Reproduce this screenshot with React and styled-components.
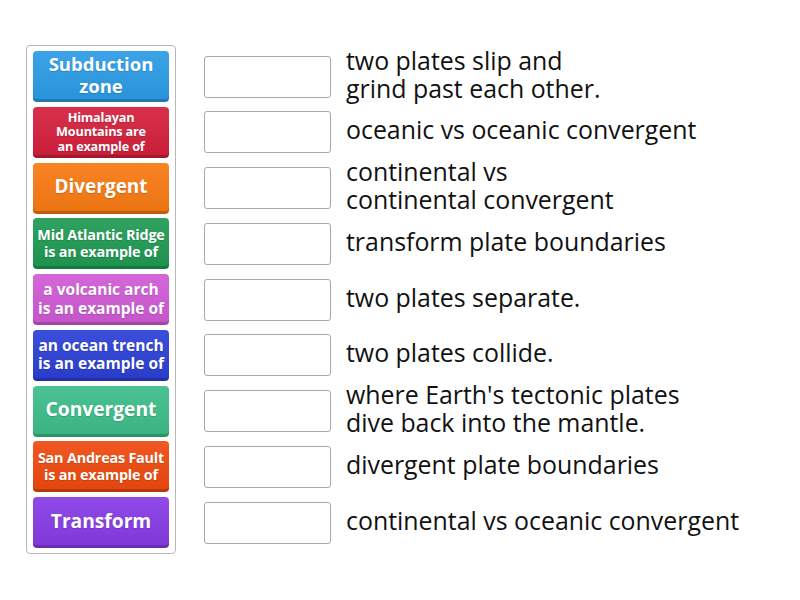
import React from 'react';
import styled, { createGlobalStyle } from 'styled-components';

const Global = createGlobalStyle`
  body {
    margin: 0;
    background: #fff;
    font-family: "Open Sans", "Noto Sans", sans-serif;
  }
`;

const Page = styled.div`
  display: flex;
  align-items: flex-start;
  gap: 28px;
  padding: 45px 0 0 26px;
  width: 800px;
  height: 600px;
  box-sizing: border-box;
`;

const Panel = styled.div`
  width: 150px;
  box-sizing: border-box;
  border: 1px solid #b8b8b8;
  border-radius: 4px;
  padding: 5px 6px;
  display: flex;
  flex-direction: column;
  gap: 4.75px;
`;

const Tile = styled.div`
  height: 51px;
  border-radius: 4px;
  background: ${p => p.$bg};
  background-image: linear-gradient(rgba(255,255,255,0.08), rgba(0,0,0,0.06));
  box-shadow: inset 0 -3px 0 rgba(0, 0, 0, 0.18);
  color: #fff;
  font-weight: 700;
  font-size: ${p => p.$size}px;
  line-height: ${p => p.$lh}px;
  display: flex;
  align-items: center;
  justify-content: center;
  text-align: center;
  padding-bottom: ${p => (p.$size > 17 ? 4 : 2)}px;
  box-sizing: border-box;
  text-shadow: 0 1px 1px rgba(0, 0, 0, 0.15);
  white-space: pre-line;
  letter-spacing: ${p => (p.$size < 15 ? '-0.2px' : '0')};
`;

const Rows = styled.div`
  padding-top: 6px;
  display: flex;
  flex-direction: column;
  gap: 4.75px;
`;

const Row = styled.div`
  height: 51px;
  display: flex;
  align-items: center;
  gap: 15px;
`;

const Slot = styled.div`
  width: 127px;
  height: 42px;
  flex: none;
  box-sizing: border-box;
  border: 1px solid #a9a9a9;
  border-radius: 3px;
  background: #fff;
`;

const Clue = styled.div`
  font-size: 24.9px;
  line-height: 28px;
  color: #111;
  white-space: pre-line;
  margin-top: -6px;
`;

const tiles = [
  { text: 'Subduction\nzone', bg: '#2b9ce6', size: 18.5, lh: 22 },
  { text: 'Himalayan\nMountains are\nan example of', bg: '#d51f3c', size: 12.7, lh: 14.5 },
  { text: 'Divergent', bg: '#f97a12', size: 19, lh: 22 },
  { text: 'Mid Atlantic Ridge\nis an example of', bg: '#1f9a53', size: 14.4, lh: 17 },
  { text: 'a volcanic arch\nis an example of', bg: '#d05ad6', size: 15.5, lh: 18.5 },
  { text: 'an ocean trench\nis an example of', bg: '#2b40d6', size: 15.5, lh: 18.5 },
  { text: 'Convergent', bg: '#3dbd89', size: 19.2, lh: 22 },
  { text: 'San Andreas Fault\nis an example of', bg: '#f0490e', size: 14.4, lh: 17 },
  { text: 'Transform', bg: '#873be6', size: 19.2, lh: 22 },
];

const clues = [
  'two plates slip and\ngrind past each other.',
  'oceanic vs oceanic convergent',
  'continental vs\ncontinental convergent',
  'transform plate boundaries',
  'two plates separate.',
  'two plates collide.',
  "where Earth's tectonic plates\ndive back into the mantle.",
  'divergent plate boundaries',
  'continental vs oceanic convergent',
];

export default function App() {
  return (
    <>
      <Global />
      <Page>
        <Panel>
          {tiles.map(t => (
            <Tile key={t.text} $bg={t.bg} $size={t.size} $lh={t.lh}>
              {t.text}
            </Tile>
          ))}
        </Panel>
        <Rows>
          {clues.map(c => (
            <Row key={c}>
              <Slot />
              <Clue>{c}</Clue>
            </Row>
          ))}
        </Rows>
      </Page>
    </>
  );
}
